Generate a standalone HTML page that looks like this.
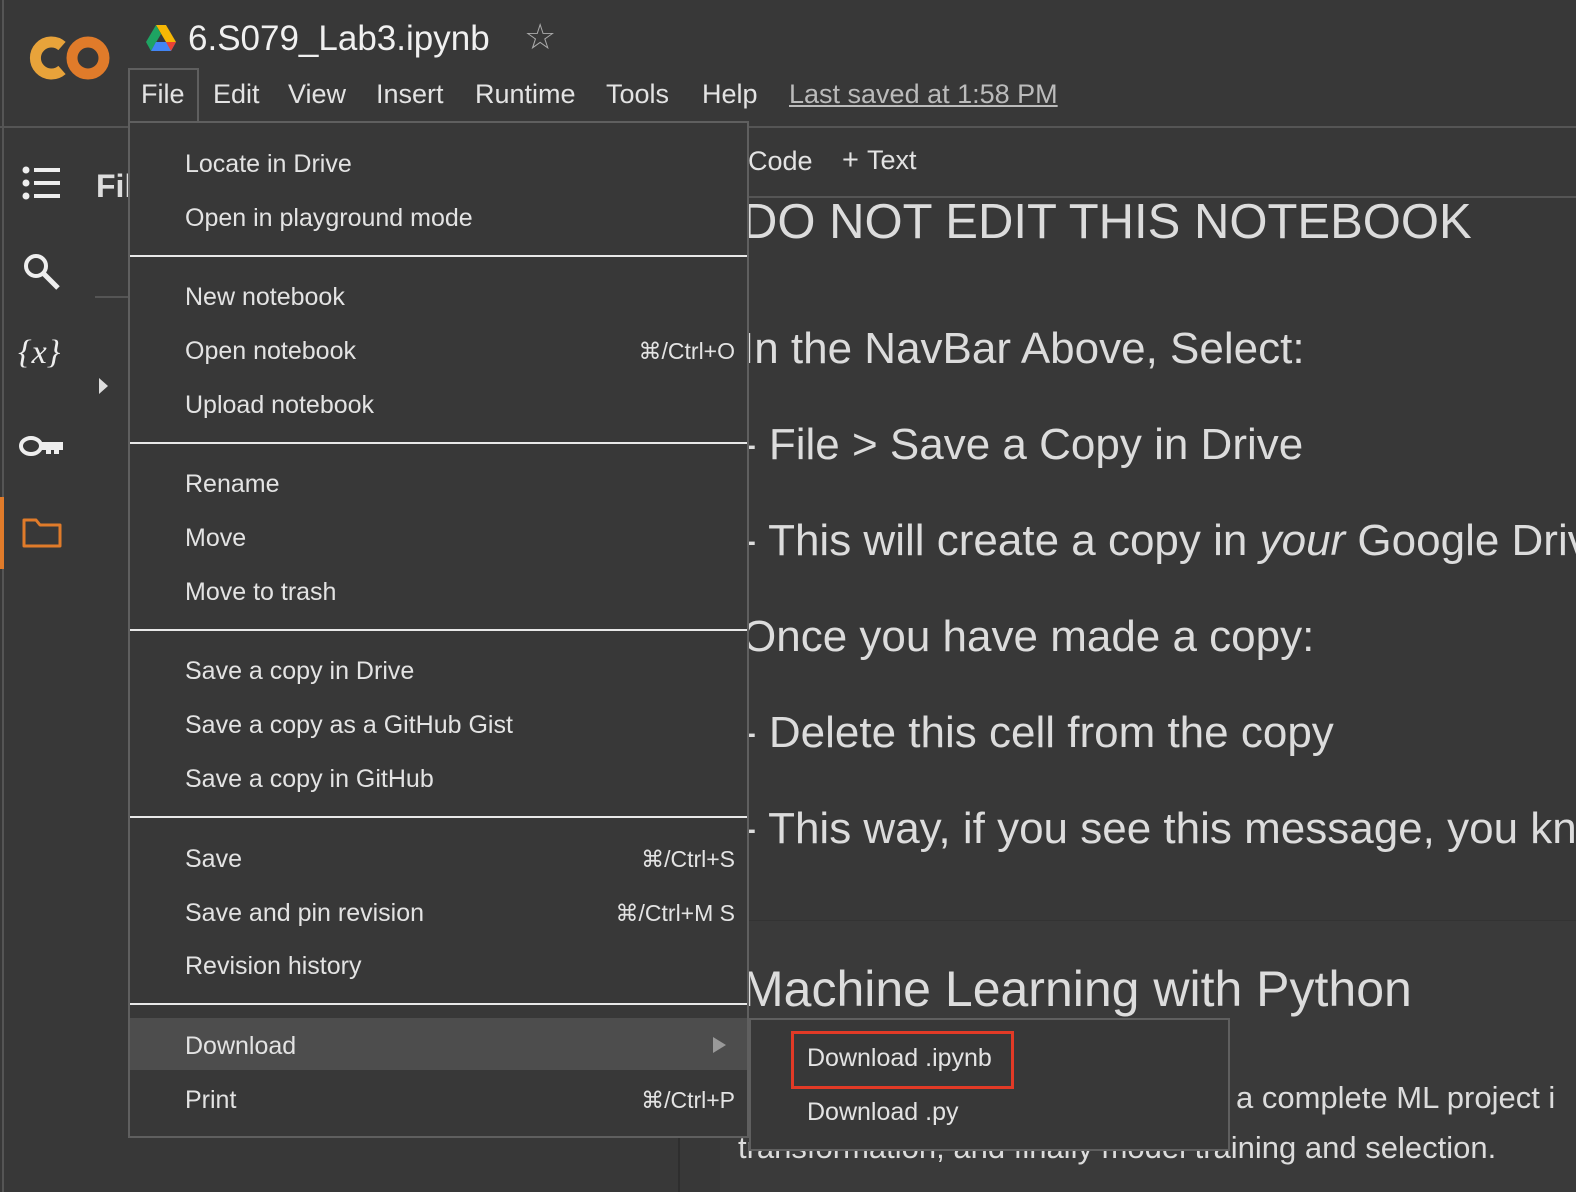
<!DOCTYPE html>
<html><head><meta charset="utf-8"><style>
*{margin:0;padding:0;box-sizing:border-box}
body{width:1576px;height:1192px;background:#383838;overflow:hidden;position:relative;font-family:"Liberation Sans",sans-serif;color:#e3e3e3}
.a{position:absolute;white-space:nowrap}
.mi{position:absolute;left:55px;font-size:25px;color:#e3e3e3;line-height:30px}
.sc{position:absolute;right:12px;font-size:23px;line-height:30px}
.sep{position:absolute;left:0;right:0;height:2px;background:#e8e8e8}
.h{font-size:44px;color:#dcdcdc}
</style></head><body>
<div class="a" style="left:0;top:126px;width:1576px;height:2px;background:#555"></div>
<div class="a" style="left:2px;top:0;width:2px;height:1192px;background:#555"></div>
<!-- logo -->
<svg class="a" style="left:28px;top:32px" width="84" height="52" viewBox="0 0 84 52">
<path d="M34 14 A16 16 0 1 0 34 38" fill="none" stroke="#e8a33a" stroke-width="11"/>
<circle cx="60" cy="26" r="16" fill="none" stroke="#e07b2a" stroke-width="11"/>
</svg>
<svg class="a" style="left:145px;top:24px" width="32" height="28" viewBox="0 0 32 28"><path d="M11 1h10l10 17h-10z" fill="#f6b704"/><path d="M11 1L1 18l5 9 10-17z" fill="#1ea362"/><path d="M6 27h20l5-9H11z" fill="#4285f4"/><path d="M21 18h10l-5 9z" fill="#e94235"/></svg>
<div class="a" style="left:188px;top:19px;font-size:35px;color:#f0f0f0">6.S079_Lab3.ipynb</div>
<div class="a" style="left:524px;top:16px;font-size:36px;color:#aaa">☆</div>
<div class="a" style="left:128px;top:68px;width:71px;height:53px;border:2px solid #5f5f5f;border-bottom:none"></div>
<div class="a" style="left:141px;top:79px;font-size:27px;color:#e3e3e3">File</div>
<div class="a" style="left:213px;top:79px;font-size:27px">Edit</div>
<div class="a" style="left:288px;top:79px;font-size:27px">View</div>
<div class="a" style="left:376px;top:79px;font-size:27px">Insert</div>
<div class="a" style="left:475px;top:79px;font-size:27px">Runtime</div>
<div class="a" style="left:606px;top:79px;font-size:27px">Tools</div>
<div class="a" style="left:702px;top:79px;font-size:27px">Help</div>
<div class="a" style="left:789px;top:79px;font-size:27px;color:#bbb;text-decoration:underline">Last saved at 1:58 PM</div>
<!-- sidebar -->
<svg class="a" style="left:22px;top:166px" width="40" height="34"><circle cx="4" cy="4" r="3.5" fill="#eee"/><circle cx="4" cy="17" r="3.5" fill="#eee"/><circle cx="4" cy="30" r="3.5" fill="#eee"/><rect x="12" y="2" width="26" height="4" fill="#eee"/><rect x="12" y="15" width="26" height="4" fill="#eee"/><rect x="12" y="28" width="26" height="4" fill="#eee"/></svg>
<div class="a" style="left:96px;top:168px;font-size:32px;font-weight:bold;color:#ddd">Fil</div>
<div class="a" style="left:95px;top:296px;width:34px;height:2px;background:#555"></div>
<svg class="a" style="left:22px;top:252px" width="40" height="40"><circle cx="14" cy="14" r="10" fill="none" stroke="#eee" stroke-width="4"/><path d="M21 21l15 15" stroke="#eee" stroke-width="5"/></svg>
<div class="a" style="left:18px;top:334px;font-size:34px;font-family:'Liberation Serif',serif;font-style:italic;color:#eee">{<i>x</i>}</div>
<div class="a" style="left:99px;top:378px;width:0;height:0;border-left:9px solid #ddd;border-top:8px solid transparent;border-bottom:8px solid transparent"></div>
<svg class="a" style="left:19px;top:434px" width="46" height="24"><ellipse cx="12" cy="12" rx="10" ry="8" fill="none" stroke="#eee" stroke-width="4"/><path d="M22 8h22v8h-4v4h-5v-4h-3v4h-5v-4h-5z" fill="#eee"/></svg>
<div class="a" style="left:0;top:497px;width:4px;height:72px;background:#e07b2a"></div>
<svg class="a" style="left:21px;top:516px" width="42" height="34"><path d="M3 4h12l4 5h20v21H3z" fill="none" stroke="#e07b2a" stroke-width="3" stroke-linejoin="round"/></svg>
<!-- notebook -->
<div class="a" style="left:748px;top:146px;font-size:27px">Code</div>
<div class="a" style="left:842px;top:144px;font-size:29px">+ <span style="font-size:27px">Text</span></div>
<div class="a" style="left:748px;top:196px;width:828px;height:2px;background:#555"></div>
<div class="a h" style="left:742px;top:194px;font-size:49px;color:#dcdcdc">DO NOT EDIT THIS NOTEBOOK</div>
<div class="a h" style="left:742px;top:324px">In the NavBar Above, Select:</div>
<div class="a h" style="left:742px;top:420px">- File &gt; Save a Copy in Drive</div>
<div class="a h" style="left:742px;top:516px">- This will create a copy in <i>your</i> Google Drive</div>
<div class="a h" style="left:742px;top:612px">Once you have made a copy:</div>
<div class="a h" style="left:742px;top:708px">- Delete this cell from the copy</div>
<div class="a h" style="left:742px;top:804px">- This way, if you see this message, you know</div>
<div class="a" style="left:720px;top:920px;width:856px;height:272px;background:#3a3a3a;border-top:1px solid #333"></div>
<div class="a h" style="left:742px;top:960px;font-size:50px">Machine Learning with Python</div>
<div class="a" style="left:1236px;top:1080px;font-size:31px;color:#dcdcdc">a complete ML project i</div>
<div class="a" style="left:738px;top:1130px;font-size:31px;color:#dcdcdc">transformation, and finally model training and selection.</div>
<div class="a" style="left:678px;top:1137px;width:2px;height:55px;background:#2e2e2e"></div>
<!-- menu -->
<div class="a" style="left:128px;top:121px;width:621px;height:1017px;background:#383838;border:2px solid #5f5f5f">
 <div class="mi" style="top:26px">Locate in Drive</div>
 <div class="mi" style="top:80px">Open in playground mode</div>
 <div class="sep" style="top:132px"></div>
 <div class="mi" style="top:159px">New notebook</div>
 <div class="mi" style="top:213px">Open notebook</div><div class="sc" style="top:213px">⌘/Ctrl+O</div>
 <div class="mi" style="top:267px">Upload notebook</div>
 <div class="sep" style="top:319px"></div>
 <div class="mi" style="top:346px">Rename</div>
 <div class="mi" style="top:400px">Move</div>
 <div class="mi" style="top:454px">Move to trash</div>
 <div class="sep" style="top:506px"></div>
 <div class="mi" style="top:533px">Save a copy in Drive</div>
 <div class="mi" style="top:587px">Save a copy as a GitHub Gist</div>
 <div class="mi" style="top:641px">Save a copy in GitHub</div>
 <div class="sep" style="top:693px"></div>
 <div class="mi" style="top:721px">Save</div><div class="sc" style="top:721px">⌘/Ctrl+S</div>
 <div class="mi" style="top:775px">Save and pin revision</div><div class="sc" style="top:775px">⌘/Ctrl+M S</div>
 <div class="mi" style="top:828px">Revision history</div>
 <div class="sep" style="top:880px"></div>
 <div class="a" style="left:0;right:0;top:895px;height:52px;background:#4d4d4d"></div>
 <div class="mi" style="top:908px">Download</div>
 <div class="a" style="left:583px;top:914px;border-left:13px solid #999;border-top:8px solid transparent;border-bottom:8px solid transparent"></div>
 <div class="mi" style="top:962px">Print</div><div class="sc" style="top:962px">⌘/Ctrl+P</div>
</div>
<!-- submenu -->
<div class="a" style="left:749px;top:1018px;width:481px;height:133px;background:#383838;border:2px solid #5f5f5f">
 <div class="a" style="left:40px;top:11px;width:223px;height:58px;border:3px solid #e23a26"></div>
 <div class="a" style="left:56px;top:24px;font-size:25px">Download .ipynb</div>
 <div class="a" style="left:56px;top:78px;font-size:25px">Download .py</div>
</div>
</body></html>
